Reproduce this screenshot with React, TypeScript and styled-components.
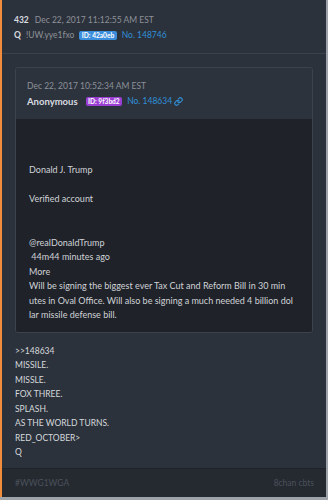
import React from "react";
import styled, { createGlobalStyle } from "styled-components";

const Global = createGlobalStyle`
  html, body { margin: 0; padding: 0; background: #9ea3aa; }
  body { font-family: Lato, "Open Sans", sans-serif; }
`;

const Card = styled.div`
  width: 326px;
  height: 497px;
  box-sizing: border-box;
  background: #2c323c;
  border-left: 2px solid #f08c3c;
  display: flex;
  flex-direction: column;
  color: #d5d8dc;
`;

const Header = styled.div`
  padding: 14px 12px 11px;
  border-bottom: 1px solid #3c424c;
  display: flex;
  flex-direction: column;
  gap: 2px;
  font-size: 8.5px;
`;

const Row = styled.div<{ $gap?: number }>`
  display: flex;
  align-items: center;
  gap: ${(p) => p.$gap ?? 5}px;
  line-height: 13px;
`;

const Bold = styled.span<{ $size?: number; $space?: number }>`
  font-weight: 700;
  color: #d9dce0;
  font-size: ${(p) => (p.$size ? `${p.$size}px` : "inherit")};
  margin-right: ${(p) => p.$space ?? 0}px;
`;

const Muted = styled.span`
  color: #8c9199;
`;

const Badge = styled.span<{ $bg: string }>`
  background: ${(p) => p.$bg};
  color: #fff;
  font-size: 6.6px;
  font-weight: 700;
  line-height: 9px;
  padding: 0 2.5px;
  border-radius: 2px;
`;

const Link = styled.span`
  color: #2f8fd8;
  display: inline-flex;
  align-items: center;
  gap: 2px;
`;

const Main = styled.div`
  flex: 1;
  padding: 13px 13px 0;
`;

const Quote = styled.div`
  border: 1px solid #3d434d;
  border-radius: 3px;
  overflow: hidden;
`;

const QuoteHead = styled.div`
  background: #2d333d;
  padding: 12px 11px 11px;
  display: flex;
  flex-direction: column;
  gap: 2px;
  font-size: 8.5px;
`;

const QuoteBody = styled.div`
  background: #1f2229;
  padding: 15px 13px 9px;
  font-size: 9px;
  line-height: 14.5px;
  white-space: pre-wrap;
  color: #d0d3d7;
`;

const Text = styled.div`
  padding: 11px 0 0;
  font-size: 8.5px;
  line-height: 14.5px;
  white-space: pre-wrap;
  color: #d6d9dd;
`;

const Footer = styled.div`
  background: #252a31;
  border-top: 1px solid #20242a;
  height: 29px;
  box-sizing: border-box;
  padding: 0 12px 0 13px;
  display: flex;
  align-items: center;
  justify-content: space-between;
  color: #4b515a;
  font-size: 8.5px;
`;

const LinkIcon = () => (
  <svg width="9" height="9" viewBox="0 0 24 24" fill="none" stroke="#2f8fd8" strokeWidth="3" strokeLinecap="round" strokeLinejoin="round">
    <path d="M10 13a5 5 0 0 0 7.54.54l3-3a5 5 0 0 0-7.07-7.07l-1.72 1.71" />
    <path d="M14 11a5 5 0 0 0-7.54-.54l-3 3a5 5 0 0 0 7.07 7.07l1.71-1.71" />
  </svg>
);

const quoteText = `

Donald J. Trump

Verified account


@realDonaldTrump
 44m44 minutes ago
More
Will be signing the biggest ever Tax Cut and Reform Bill in 30 min
utes in Oval Office. Will also be signing a much needed 4 billion dol
lar missile defense bill.`;

const postText = `>>148634
MISSILE.
MISSLE.
FOX THREE.
SPLASH.
AS THE WORLD TURNS.
RED_OCTOBER>
Q`;

export default function App() {
  return (
    <>
      <Global />
      <Card>
        <Header>
          <Row $gap={6}>
            <Bold>432</Bold>
            <Muted>Dec 22, 2017 11:12:55 AM EST</Muted>
          </Row>
          <Row>
            <Bold>Q</Bold>
            <Muted>!UW.yye1fxo</Muted>
            <Badge $bg="#3b8edb">ID: 42a0eb</Badge>
            <Link>No. 148746</Link>
          </Row>
        </Header>
        <Main>
          <Quote>
            <QuoteHead>
              <Row>
                <Muted>Dec 22, 2017 10:52:34 AM EST</Muted>
              </Row>
              <Row>
                <Bold $size={9.5} $space={3}>Anonymous</Bold>
                <Badge $bg="#9b3fd4">ID: 9f3bd2</Badge>
                <Link>
                  No. 148634 <LinkIcon />
                </Link>
              </Row>
            </QuoteHead>
            <QuoteBody>{quoteText}</QuoteBody>
          </Quote>
          <Text>{postText}</Text>
        </Main>
        <Footer>
          <span>#WWG1WGA</span>
          <span>8chan cbts</span>
        </Footer>
      </Card>
    </>
  );
}
